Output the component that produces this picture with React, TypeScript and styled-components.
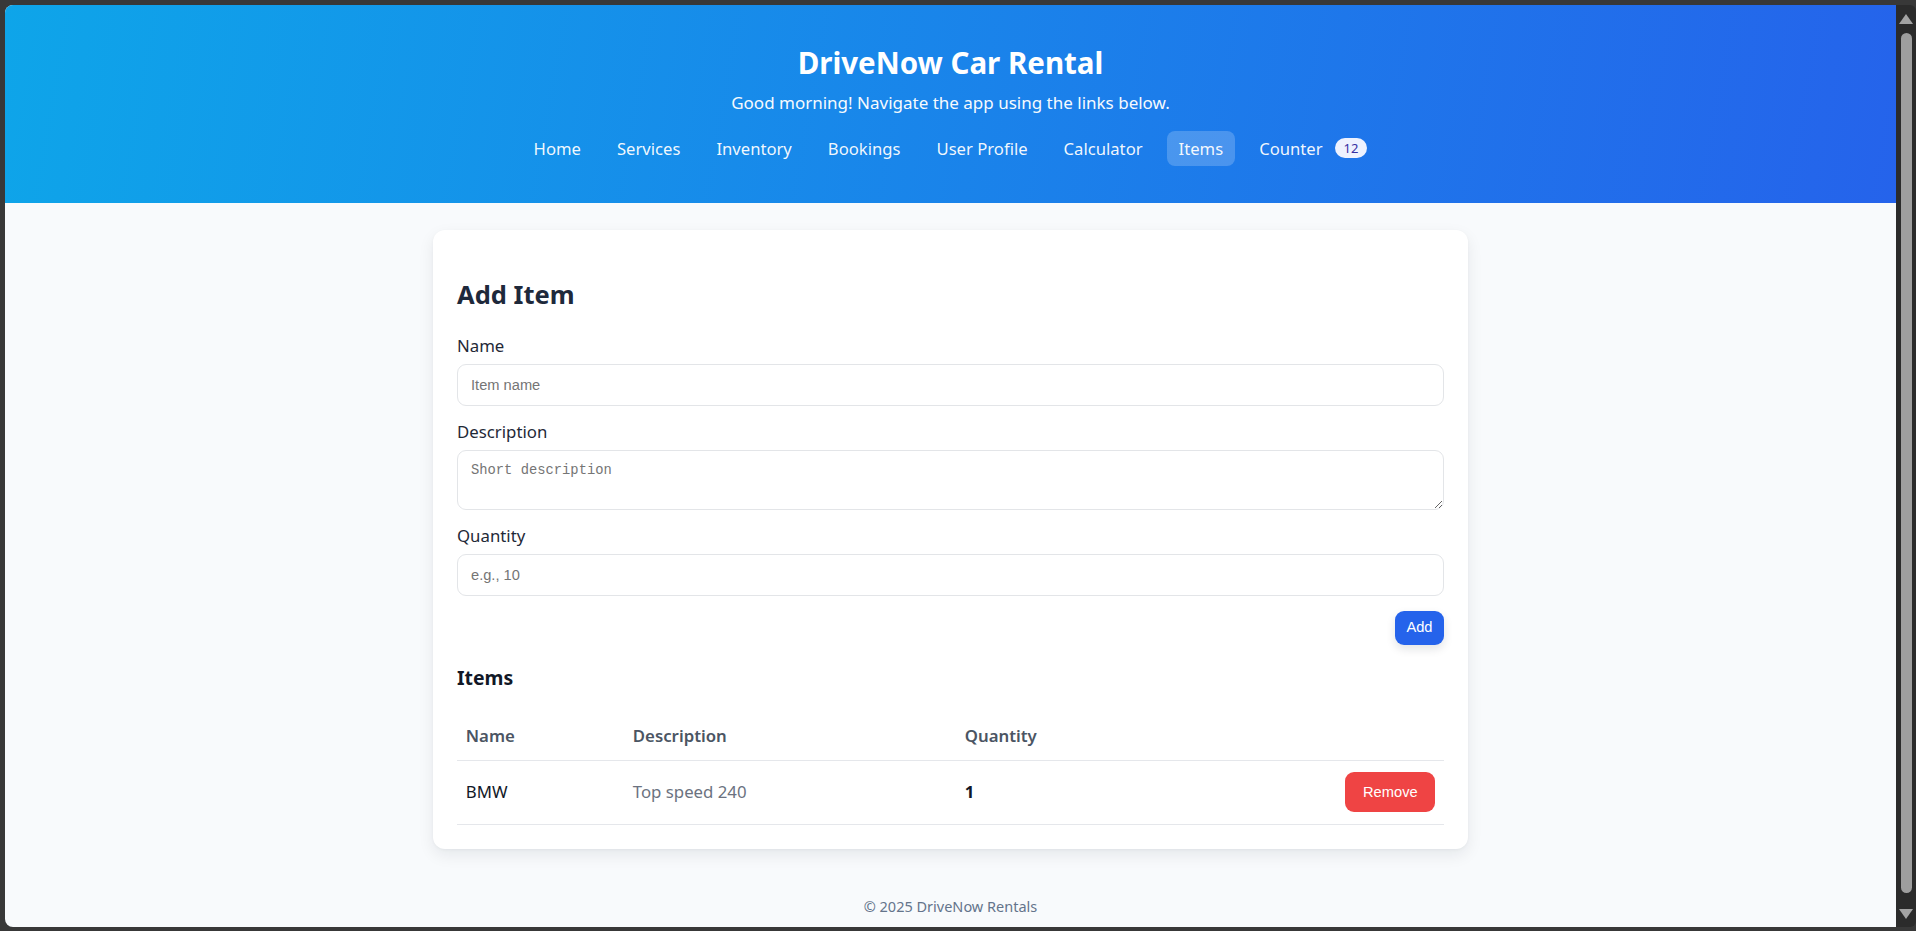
import { useState } from "react"
import styled, { createGlobalStyle } from "styled-components"

const GlobalStyle = createGlobalStyle`
  html, body {
    margin: 0;
    padding: 0;
    height: 100%;
    overflow: hidden;
  }
  body {
    font-family: "Noto Sans", "Open Sans", Arial, sans-serif;
    background: #383838;
  }
  * {
    box-sizing: border-box;
  }
`

const Frame = styled.div`
  height: 100vh;
  padding: 5px 0 4px 5px;
  background: #383838;
`

const Window = styled.div`
  height: 100%;
  display: flex;
  border-radius: 8px 6px 6px 8px;
  overflow: hidden;
`

const Page = styled.div`
  flex: 1;
  min-width: 0;
  overflow: hidden;
  background: #f8fafc;
  color: #1f2937;
`

const ScrollTrack = styled.div`
  width: 20px;
  flex-shrink: 0;
  background: #2b2b2b;
  display: flex;
  flex-direction: column;
  align-items: center;
  padding: 9px 0 8px;
`

const Arrow = styled.div<{ $down?: boolean }>`
  width: 0;
  height: 0;
  border-left: 7px solid transparent;
  border-right: 7px solid transparent;
  ${(p) =>
    p.$down
      ? "border-top: 10px solid #a3a3a3;"
      : "border-bottom: 10px solid #a3a3a3;"}
`

const Thumb = styled.div`
  width: 11px;
  flex: 1;
  margin: 9px 0 16px;
  border-radius: 6px;
  background: #9e9e9e;
`

const Header = styled.header`
  padding: 39px 16px 37px;
  text-align: center;
  color: #ffffff;
  background: linear-gradient(100deg, #0ea5e9 0%, #2563eb 100%);
`

const Title = styled.h1`
  margin: 0;
  font-size: 29.5px;
  line-height: 38px;
  font-weight: 700;
`

const Subtitle = styled.p`
  margin: 9px 0 0;
  font-size: 17px;
  line-height: 24px;
  opacity: 0.96;
`

const Nav = styled.nav`
  margin-top: 15px;
  display: flex;
  justify-content: center;
  align-items: center;
  gap: 12px;
`

const NavLink = styled.a<{ $active?: boolean }>`
  display: inline-flex;
  align-items: center;
  padding: 8px 12px;
  border-radius: 8px;
  font-size: 16.65px;
  line-height: 19px;
  color: rgba(255, 255, 255, 0.94);
  text-decoration: none;
  background: ${(p) => (p.$active ? "rgba(255, 255, 255, 0.2)" : "transparent")};
  cursor: pointer;
`

const Badge = styled.span`
  margin-left: 12px;
  height: 20px;
  padding: 0 9px;
  border-radius: 999px;
  background: #eef2ff;
  color: #3730a3;
  font-size: 13px;
  line-height: 20px;
`

const Main = styled.main`
  padding: 27px 16px 24px;
`

const Card = styled.section`
  max-width: 1035px;
  margin: 0 auto;
  padding: 24px;
  background: #ffffff;
  border-radius: 12px;
  box-shadow: 0 6px 16px rgba(15, 23, 42, 0.08), 0 1px 3px rgba(15, 23, 42, 0.04);
`

const CardTitle = styled.h2`
  margin: 22px 0;
  font-size: 25.5px;
  line-height: 36px;
  font-weight: 700;
  color: #1e293b;
`

const Form = styled.form`
  display: flex;
  flex-direction: column;
`

const Field = styled.div`
  display: flex;
  flex-direction: column;
  gap: 6px;
  margin-bottom: 14px;
`

const Label = styled.label`
  font-size: 16.8px;
  line-height: 24px;
  color: #1f2937;
`

const Input = styled.input`
  width: 100%;
  height: 41.5px;
  padding: 11px 13px;
  border: 1px solid #e3e5e8;
  border-radius: 9px;
  font-family: "Liberation Sans", Arial, sans-serif;
  font-size: 14.67px;
  color: #1f2937;
  background: #ffffff;
  outline: none;

  &::placeholder {
    color: #757575;
  }
`

const TextArea = styled.textarea`
  width: 100%;
  height: 60.5px;
  padding: 11px 13px;
  border: 1px solid #e3e5e8;
  border-radius: 9px;
  font-family: "Liberation Mono", "DejaVu Sans Mono", monospace;
  font-size: 13.8px;
  line-height: 18px;
  color: #1f2937;
  background: #ffffff;
  outline: none;

  &::placeholder {
    color: #757575;
  }
`

const Actions = styled.div`
  display: flex;
  justify-content: flex-end;
  margin-top: 1px;
`

const Button = styled.button<{ $variant?: "primary" | "danger" }>`
  border: none;
  border-radius: 9px;
  font-family: "Liberation Sans", Arial, sans-serif;
  font-size: 14.67px;
  line-height: 17px;
  color: #ffffff;
  cursor: pointer;
  background: ${(p) => (p.$variant === "danger" ? "#ef4444" : "#2563eb")};
  padding: ${(p) => (p.$variant === "danger" ? "11.5px 17.6px" : "8.5px 11.5px")};
  box-shadow: ${(p) =>
    p.$variant === "danger" ? "none" : "0 4px 10px rgba(15, 23, 42, 0.12)"};
`

const SectionTitle = styled.h3`
  margin: 20.6px 0;
  font-size: 19.4px;
  line-height: 26px;
  font-weight: 700;
  color: #111827;
`

const Table = styled.table`
  width: 100%;
  border-collapse: collapse;
  table-layout: fixed;
`

const Th = styled.th`
  padding: 12px 8.8px;
  text-align: left;
  font-size: 16.8px;
  line-height: 24px;
  font-weight: 600;
  color: #4b5563;
  border-bottom: 1px solid #e5e7eb;
`

const Td = styled.td<{ $tone?: "muted" | "strong"; $align?: "right" }>`
  padding: 11.5px 8.8px;
  font-size: 16.8px;
  line-height: 24px;
  border-bottom: 1px solid #e5e7eb;
  text-align: ${(p) => p.$align ?? "left"};
  color: ${(p) => (p.$tone === "muted" ? "#6b7280" : "#111827")};
  font-weight: ${(p) => (p.$tone === "strong" ? 700 : 400)};
`

const Footer = styled.footer`
  padding: 23px 16px 24px;
  text-align: center;
  font-size: 14.5px;
  line-height: 21px;
  color: #64748b;
`

type Item = { id: number; name: string; description: string; quantity: number }

const links = ["Home", "Services", "Inventory", "Bookings", "User Profile", "Calculator", "Items"]

export default function App() {
  const [items, setItems] = useState<Item[]>([
    { id: 1, name: "BMW", description: "Top speed 240", quantity: 1 },
  ])
  const [name, setName] = useState("")
  const [description, setDescription] = useState("")
  const [quantity, setQuantity] = useState("")

  const onSubmit = (e: React.FormEvent<HTMLFormElement>) => {
    e.preventDefault()
    if (!name.trim()) return
    setItems((prev) => [
      ...prev,
      { id: Date.now(), name, description, quantity: Number(quantity) || 0 },
    ])
    setName("")
    setDescription("")
    setQuantity("")
  }

  return (
    <Frame>
      <GlobalStyle />
      <Window>
        <Page>
          <Header>
            <Title>DriveNow Car Rental</Title>
            <Subtitle>Good morning! Navigate the app using the links below.</Subtitle>
            <Nav>
              {links.map((link) => (
                <NavLink key={link} $active={link === "Items"}>
                  {link}
                </NavLink>
              ))}
              <NavLink>
                Counter
                <Badge>12</Badge>
              </NavLink>
            </Nav>
          </Header>

          <Main>
            <Card>
              <CardTitle>Add Item</CardTitle>
              <Form onSubmit={onSubmit}>
                <Field>
                  <Label htmlFor="item-name">Name</Label>
                  <Input
                    id="item-name"
                    placeholder="Item name"
                    value={name}
                    onChange={(e) => setName(e.target.value)}
                  />
                </Field>
                <Field>
                  <Label htmlFor="item-description">Description</Label>
                  <TextArea
                    id="item-description"
                    placeholder="Short description"
                    value={description}
                    onChange={(e) => setDescription(e.target.value)}
                  />
                </Field>
                <Field>
                  <Label htmlFor="item-quantity">Quantity</Label>
                  <Input
                    id="item-quantity"
                    placeholder="e.g., 10"
                    value={quantity}
                    onChange={(e) => setQuantity(e.target.value)}
                  />
                </Field>
                <Actions>
                  <Button type="submit">Add</Button>
                </Actions>
              </Form>

              <SectionTitle>Items</SectionTitle>
              <Table>
                <colgroup>
                  <col style={{ width: 167 }} />
                  <col style={{ width: 332 }} />
                  <col />
                  <col style={{ width: 140 }} />
                </colgroup>
                <thead>
                  <tr>
                    <Th>Name</Th>
                    <Th>Description</Th>
                    <Th>Quantity</Th>
                    <Th />
                  </tr>
                </thead>
                <tbody>
                  {items.map((item) => (
                    <tr key={item.id}>
                      <Td>{item.name}</Td>
                      <Td $tone="muted">{item.description}</Td>
                      <Td $tone="strong">{item.quantity}</Td>
                      <Td $align="right">
                        <Button
                          $variant="danger"
                          onClick={() => setItems((prev) => prev.filter((i) => i.id !== item.id))}
                        >
                          Remove
                        </Button>
                      </Td>
                    </tr>
                  ))}
                </tbody>
              </Table>
            </Card>
          </Main>

          <Footer>© 2025 DriveNow Rentals</Footer>
        </Page>
        <ScrollTrack>
          <Arrow />
          <Thumb />
          <Arrow $down />
        </ScrollTrack>
      </Window>
    </Frame>
  )
}
